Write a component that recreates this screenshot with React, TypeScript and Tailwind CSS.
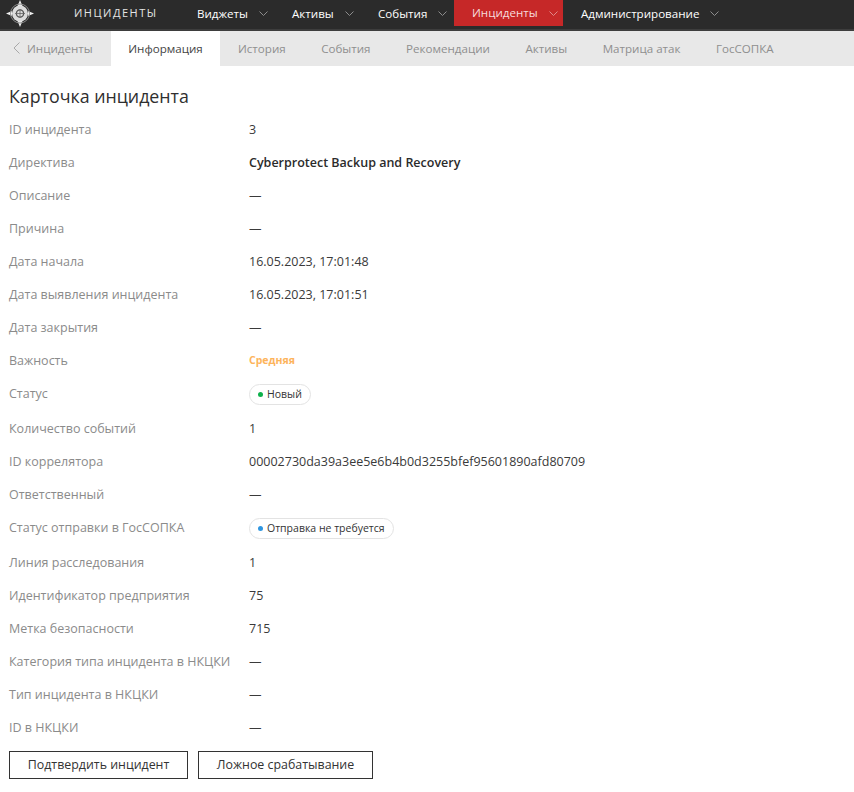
import React from "react";

const ChevronDown = ({ className = "" }: { className?: string }) => (
  <svg width="9" height="5" viewBox="0 0 9 5" fill="none" className={className}>
    <path d="M0.5 0.5 L4.5 4.5 L8.5 0.5" stroke="currentColor" strokeWidth="1" />
  </svg>
);

const Logo = () => (
  <svg width="28" height="27" viewBox="0 0 28 27" className="shrink-0">
    <polygon points="14,0 16.5,6 11.5,6" fill="#efefef" />
    <polygon points="14,27 16.5,21 11.5,21" fill="#efefef" />
    <polygon points="0,13.5 6,11 6,16" fill="#efefef" />
    <polygon points="28,13.5 22,11 22,16" fill="#efefef" />
    <circle cx="14" cy="13.5" r="9.5" fill="none" stroke="#8a8a8a" strokeWidth="1" />
    <circle cx="14" cy="13.5" r="8" fill="#dcdcdc" />
    <circle cx="14" cy="13.5" r="3.6" fill="none" stroke="#555" strokeWidth="1.3" />
    <path d="M9 13.5 H19 M14 9 V18" stroke="#666" strokeWidth="0.8" />
  </svg>
);

const menu = [
  { label: "Виджеты", w: "w-[95px]" },
  { label: "Активы", w: "w-[86px]" },
  { label: "События", w: "w-[76px]" },
];

const tabs = ["История", "События", "Рекомендации", "Активы", "Матрица атак", "ГосСОПКА"];

type Row = { label: string; value?: React.ReactNode; h?: string; lift?: boolean };

const Pill = ({ dot, text }: { dot: string; text: string }) => (
  <span className="inline-flex h-[21px] items-center gap-[4px] rounded-full border border-[#e3e3e3] bg-white px-[8px] text-[10.5px] text-[#333]">
    <span className={`h-[5px] w-[5px] rounded-full ${dot}`} />
    {text}
  </span>
);

const rows: Row[] = [
  { label: "ID инцидента", value: "3" },
  { label: "Директива", value: <span className="font-semibold text-[#2b2b2b]">Cyberprotect Backup and Recovery</span> },
  { label: "Описание", value: "—" },
  { label: "Причина", value: "—" },
  { label: "Дата начала", value: "16.05.2023, 17:01:48" },
  { label: "Дата выявления инцидента", value: "16.05.2023, 17:01:51" },
  { label: "Дата закрытия", value: "—" },
  { label: "Важность", value: <span className="mb-[2px] block text-[10.5px] font-bold text-[#fdb45c]">Средняя</span> },
  { label: "Статус", value: <Pill dot="bg-[#0db14b]" text="Новый" />, h: "h-[35px]", lift: true },
  { label: "Количество событий", value: "1" },
  { label: "ID коррелятора", value: "00002730da39a3ee5e6b4b0d3255bfef95601890afd80709" },
  { label: "Ответственный", value: "—" },
  { label: "Статус отправки в ГосСОПКА", value: <Pill dot="bg-[#2f96e0]" text="Отправка не требуется" />, h: "h-[35px]", lift: true },
  { label: "Линия расследования", value: "1" },
  { label: "Идентификатор предприятия", value: "75" },
  { label: "Метка безопасности", value: "715" },
  { label: "Категория типа инцидента в НКЦКИ", value: "—" },
  { label: "Тип инцидента в НКЦКИ", value: "—" },
  { label: "ID в НКЦКИ", value: "—" },
];

export default function App() {
  return (
    <div className="h-[792px] w-[854px] overflow-hidden bg-white font-['Open_Sans',sans-serif] text-[12.5px] text-[#333]">
      <header className="flex h-[31px] items-start border-b-2 border-[#3d3d3d] bg-[#2b2b2b] text-[11.6px] text-white">
        <div className="flex h-[27px] w-[197px] items-center pl-[6px]">
          <Logo />
          <span className="ml-[40px] text-[11px] tracking-[1.5px] text-[#e4e4e4]">ИНЦИДЕНТЫ</span>
        </div>
        {menu.map((m) => (
          <div key={m.label} className={`flex h-[27px] items-center ${m.w}`}>
            <span>{m.label}</span>
            <ChevronDown className="ml-[11px] text-[#8d8d8d]" />
          </div>
        ))}
        <div className="flex h-[26px] w-[109px] items-center bg-[#c62828] pl-[18px] text-[#f6dcdc]">
          <span>Инциденты</span>
          <ChevronDown className="ml-[11px] text-[#e08a8a]" />
        </div>
        <div className="ml-[18px] flex h-[27px] items-center">
          <span>Администрирование</span>
          <ChevronDown className="ml-[11px] text-[#8d8d8d]" />
        </div>
      </header>

      <nav className="flex h-[35px] items-center bg-[#e8e8e8] text-[11.6px] text-[#8f8f8f]">
        <div className="flex w-[111px] items-center pl-[13px]">
          <svg width="7" height="12" viewBox="0 0 7 12" fill="none" className="mr-[7px]">
            <path d="M6.5 0.5 L1 6 L6.5 11.5" stroke="#a8a8a8" strokeWidth="1" />
          </svg>
          Инциденты
        </div>
        <div className="flex h-full w-[109px] items-center justify-center bg-white text-[#444]">Информация</div>
        <div className="flex items-center gap-[35.5px] pl-[18px]">
          {tabs.map((t) => (
            <span key={t}>{t}</span>
          ))}
        </div>
      </nav>

      <main className="px-[9px] pt-[17px]">
        <h1 className="mb-[5px] text-[17.8px] leading-[26px] font-normal text-[#2f2f2f]">Карточка инцидента</h1>
        <div className="flex flex-col">
          {rows.map((r) => (
            <div key={r.label} className={`flex items-center ${r.h ?? "h-[33px]"}`}>
              <div className={`w-[240px] shrink-0 text-[#8b8b8b] ${r.lift ? "mb-[2px]" : ""}`}>{r.label}</div>
              <div className={`text-[#3a3a3a] ${r.lift ? "mb-[2px]" : ""}`}>{r.value}</div>
            </div>
          ))}
        </div>
        <div className="mt-[6px] flex gap-[10px]">
          <button className="h-[28px] w-[179px] border border-[#333] bg-white text-[12.4px] text-[#333]">Подтвердить инцидент</button>
          <button className="h-[28px] w-[175px] border border-[#333] bg-white text-[12.4px] text-[#333]">Ложное срабатывание</button>
        </div>
      </main>
    </div>
  );
}
